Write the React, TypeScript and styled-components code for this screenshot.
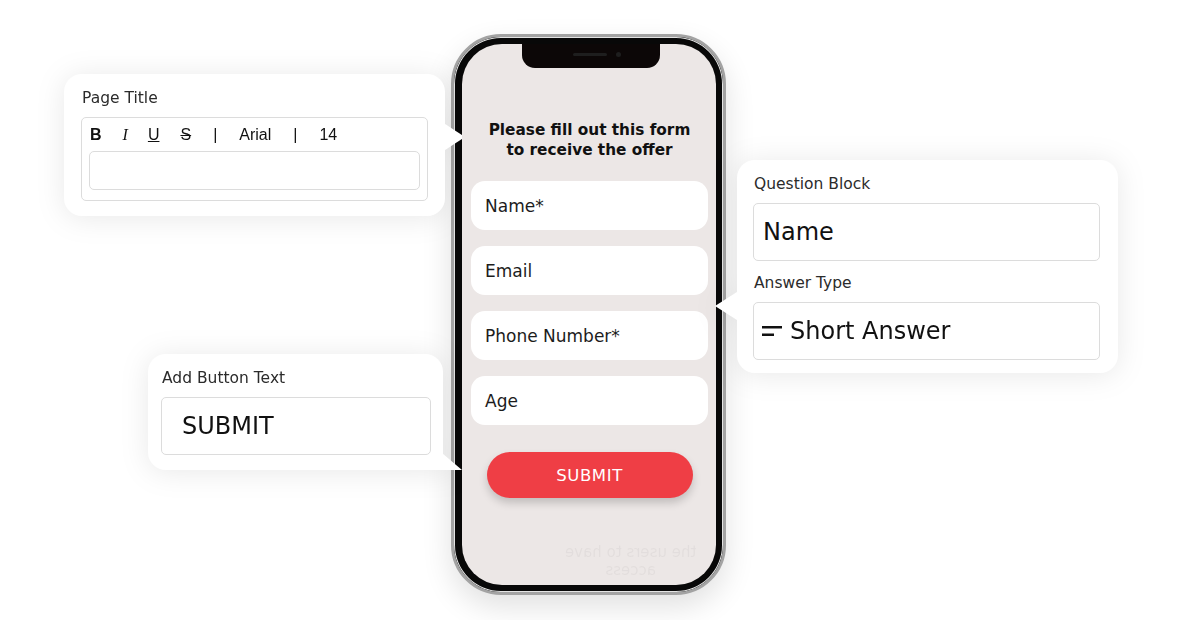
import styled, { createGlobalStyle } from "styled-components";

const GlobalStyle = createGlobalStyle`
  html, body {
    margin: 0;
    padding: 0;
    background: #ffffff;
  }
  body {
    font-family: "DejaVu Sans", "Noto Sans", sans-serif;
    color: #222;
  }
`;

const Stage = styled.div`
  width: 1182px;
  height: 620px;
  display: flex;
  align-items: flex-start;
  padding-left: 64px;
  box-sizing: border-box;
  overflow: hidden;
`;

const LeftColumn = styled.div`
  width: 381px;
  padding-top: 74px;
  display: flex;
  flex-direction: column;
  align-items: flex-end;
`;

const RightColumn = styled.div`
  width: 381px;
  margin-left: 11px;
  padding-top: 160px;
`;

const Card = styled.div<{ $width: number; $tail: "right" | "left" | "corner" }>`
  position: relative;
  width: ${(p) => p.$width}px;
  box-sizing: border-box;
  background: #fff;
  border-radius: 18px;
  ${(p) => p.$tail === "corner" && "border-bottom-right-radius: 0;"}
  filter: drop-shadow(0 2px 14px rgba(0, 0, 0, 0.09));

  &::after {
    content: "";
    position: absolute;
    width: 0;
    height: 0;
    ${(p) =>
      p.$tail === "right"
        ? `right: -20px; top: 50px; border-left: 20px solid #fff; border-top: 13px solid transparent; border-bottom: 13px solid transparent;`
        : p.$tail === "left"
        ? `left: -22px; top: 132px; border-right: 22px solid #fff; border-top: 14px solid transparent; border-bottom: 14px solid transparent;`
        : `right: -19px; bottom: 0; border-bottom: 16px solid #fff; border-right: 19px solid transparent;`}
  }
`;

const TitleCard = styled(Card)`
  padding: 14px 17px 15px 17px;
`;

const QuestionCard = styled(Card)`
  padding: 14px 18px 13px 16px;
`;

const ButtonCard = styled(Card)`
  margin-top: 138px;
  margin-right: 2px;
  padding: 14px 12px 15px 13px;
`;

const Label = styled.div<{ $gap?: number }>`
  font-size: 15.5px;
  line-height: 20px;
  color: #2b2b2b;
  padding-left: 1px;
  margin-top: ${(p) => p.$gap ?? 0}px;
  margin-bottom: 9px;
`;

const EditorBox = styled.div`
  border: 1px solid #dcdcdc;
  border-radius: 5px;
  padding: 8px 7px 10px 7px;
`;

const Toolbar = styled.div`
  display: flex;
  align-items: center;
  height: 18px;
  padding-left: 1px;
  margin-bottom: 7px;
  font-family: "Liberation Sans", Arial, sans-serif;
  font-size: 16px;
  color: #111;
`;

const Tool = styled.span<{ $space: number }>`
  margin-right: ${(p) => p.$space}px;
`;

const BoldTool = styled(Tool)`
  font-weight: 700;
`;

const ItalicTool = styled(Tool)`
  font-family: "Liberation Serif", serif;
  font-style: italic;
`;

const UnderTool = styled(Tool)`
  text-decoration: underline;
`;

const StrikeTool = styled(Tool)`
  text-decoration: line-through;
`;

const TitleInput = styled.div`
  height: 39px;
  box-sizing: border-box;
  border: 1px solid #dcdcdc;
  border-radius: 5px;
  background: #fff;
`;

const ValueBox = styled.div<{ $pad: number }>`
  height: 58px;
  box-sizing: border-box;
  border: 1px solid #dcdcdc;
  border-radius: 5px;
  display: flex;
  align-items: center;
  gap: 8px;
  padding-left: ${(p) => p.$pad}px;
  font-size: 24px;
  color: #111;
`;

const PhoneWrap = styled.div`
  margin-left: 6px;
  margin-top: 34px;
`;

const Phone = styled.div`
  width: 275px;
  height: 561px;
  box-sizing: border-box;
  border-radius: 50px;
  border: 3px solid #a3a3a3;
  background: #080808;
  padding: 7px 7px 7px 8px;
  box-shadow: inset 0 0 0 1px #e4e4e4, 0 12px 30px rgba(0, 0, 0, 0.12);
`;

const Screen = styled.div`
  position: relative;
  height: 100%;
  border-radius: 40px;
  background: #ece7e6;
  overflow: hidden;
  display: flex;
  flex-direction: column;
  padding: 76px 8px 0 9px;
  box-sizing: border-box;
`;

const Notch = styled.div`
  position: absolute;
  top: 0;
  left: 60px;
  width: 138px;
  height: 24px;
  background: #0c0707;
  border-radius: 0 0 13px 13px;
`;

const Speaker = styled.div`
  position: absolute;
  top: 9px;
  left: 51px;
  width: 34px;
  height: 3px;
  border-radius: 2px;
  background: #1e1e1e;
`;

const Camera = styled.div`
  position: absolute;
  top: 8px;
  left: 94px;
  width: 5px;
  height: 5px;
  border-radius: 50%;
  background: #1e1e1e;
`;

const Heading = styled.h1`
  margin: 0 0 21px;
  font-size: 15.3px;
  line-height: 20px;
  font-weight: 700;
  text-align: center;
  color: #111;
`;

const FieldList = styled.div`
  display: flex;
  flex-direction: column;
  gap: 16px;
  flex-shrink: 0;
`;

const Field = styled.div`
  height: 49px;
  flex-shrink: 0;
  border-radius: 14px;
  background: #fff;
  display: flex;
  align-items: center;
  padding-left: 14px;
  font-size: 17px;
  color: #1c1c1c;
`;

const SubmitButton = styled.div`
  flex-shrink: 0;
  align-self: center;
  margin-top: 27px;
  width: 206px;
  height: 46px;
  border-radius: 23px;
  background: #ef3e45;
  color: #fff;
  display: flex;
  align-items: center;
  justify-content: center;
  font-size: 16.5px;
  letter-spacing: 0.6px;
  box-shadow: 0 5px 8px rgba(0, 0, 0, 0.18);
`;

const Ghost = styled.div`
  flex-shrink: 0;
  align-self: flex-end;
  margin-top: 45px;
  margin-right: 12px;
  transform: scaleX(-1);
  white-space: nowrap;
  font-size: 15px;
  line-height: 18px;
  color: rgba(0, 0, 0, 0.04);
  text-align: center;
`;

const ShortIcon = () => (
  <svg width="20" height="12" viewBox="0 0 20 12">
    <rect x="0" y="1" width="20" height="2.5" fill="#111" />
    <rect x="0" y="8.5" width="12" height="2.5" fill="#111" />
  </svg>
);

const fields = ["Name*", "Email", "Phone Number*", "Age"];

export default function App() {
  return (
    <>
      <GlobalStyle />
      <Stage>
        <LeftColumn>
          <TitleCard $width={381} $tail="right">
            <Label>Page Title</Label>
            <EditorBox>
              <Toolbar>
                <BoldTool $space={21}>B</BoldTool>
                <ItalicTool $space={20}>I</ItalicTool>
                <UnderTool $space={21}>U</UnderTool>
                <StrikeTool $space={22}>S</StrikeTool>
                <Tool $space={22}>|</Tool>
                <Tool $space={22}>Arial</Tool>
                <Tool $space={22}>|</Tool>
                <Tool $space={0}>14</Tool>
              </Toolbar>
              <TitleInput />
            </EditorBox>
          </TitleCard>

          <ButtonCard $width={295} $tail="corner">
            <Label>Add Button Text</Label>
            <ValueBox $pad={20}>SUBMIT</ValueBox>
          </ButtonCard>
        </LeftColumn>

        <PhoneWrap>
          <Phone>
            <Screen>
              <Notch>
                <Speaker />
                <Camera />
              </Notch>
              <Heading>
                Please fill out this form
                <br />
                to receive the offer
              </Heading>
              <FieldList>
                {fields.map((f) => (
                  <Field key={f}>{f}</Field>
                ))}
              </FieldList>
              <SubmitButton>SUBMIT</SubmitButton>
              <Ghost>
                the users to have
                <br />
                access
              </Ghost>
            </Screen>
          </Phone>
        </PhoneWrap>

        <RightColumn>
          <QuestionCard $width={381} $tail="left">
            <Label>Question Block</Label>
            <ValueBox $pad={9}>Name</ValueBox>
            <Label $gap={12}>Answer Type</Label>
            <ValueBox $pad={8}>
              <ShortIcon />
              Short Answer
            </ValueBox>
          </QuestionCard>
        </RightColumn>
      </Stage>
    </>
  );
}
